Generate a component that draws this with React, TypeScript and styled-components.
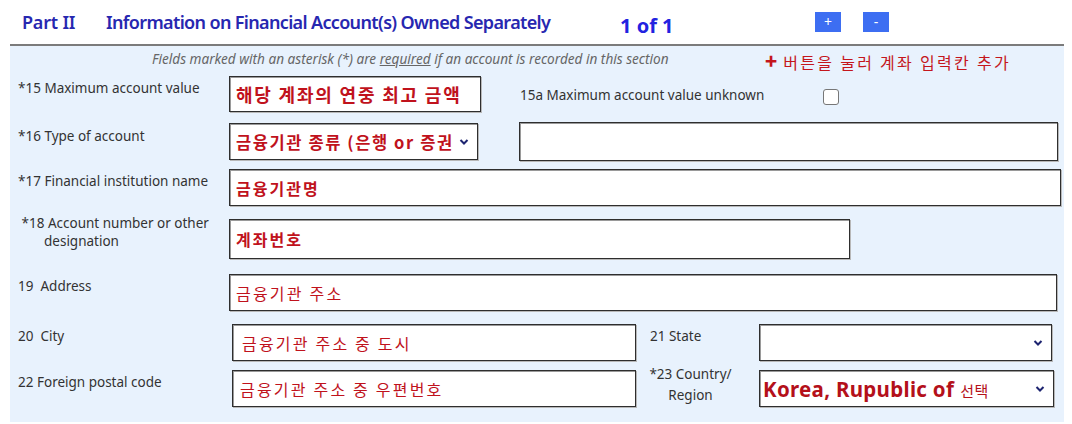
import styled, { createGlobalStyle } from "styled-components";

const GlobalStyle = createGlobalStyle`
  body {
    margin: 0;
    background: #ffffff;
    font-family: "Noto Sans", "Noto Sans CJK KR", sans-serif;
  }
`;

const Page = styled.div`
  width: 1072px;
  height: 424px;
  overflow: hidden;
`;

const Header = styled.div`
  height: 44px;
  display: flex;
  align-items: center;
  padding-left: 22px;
  box-sizing: border-box;
`;

const PartLabel = styled.div`
  font-size: 18px;
  font-weight: 600;
  color: #2727b0;
  width: 84px;
  letter-spacing: -0.2px;
`;

const Title = styled.div`
  font-size: 18px;
  font-weight: 600;
  color: #2727b0;
  width: 514px;
  letter-spacing: -0.65px;
`;

const Counter = styled.div`
  font-size: 20px;
  font-weight: 700;
  color: #2222e0;
  width: 195px;
  margin-top: 6px;
`;

const SmallButton = styled.button`
  width: 26px;
  height: 20px;
  margin-right: 22px;
  border: none;
  padding: 0;
  background: #3d6ef2;
  color: #ffffff;
  font-family: "Noto Sans", sans-serif;
  font-size: 14px;
  line-height: 20px;
`;

const Panel = styled.div`
  margin-left: 10px;
  width: 1054px;
  height: 378px;
  border-top: 2px solid #7b7b7b;
  background: #e8f2fd;
  padding-left: 8px;
  box-sizing: border-box;
`;

const Notice = styled.div`
  height: 24px;
  display: flex;
  align-items: center;
  padding-left: 134px;
`;

const Hint = styled.div`
  font-size: 13.6px;
  font-style: italic;
  color: #666666;
  width: 613px;
  white-space: nowrap;
  u {
    text-decoration: underline;
  }
`;

const AddHint = styled.div`
  font-family: "Noto Sans CJK KR", sans-serif;
  font-size: 16px;
  letter-spacing: 2.3px;
  color: #c4161c;
  margin-top: 4px;
  white-space: nowrap;
  b {
    font-size: 20px;
    font-weight: 800;
    margin-right: 6px;
    letter-spacing: 0;
  }
`;

const Row = styled.div<{ $top: number }>`
  display: flex;
  align-items: flex-start;
  margin-top: ${(p) => p.$top}px;
`;

const Label = styled.div<{ $width: number; $offset?: number; $indent?: number }>`
  width: ${(p) => p.$width}px;
  flex-shrink: 0;
  box-sizing: border-box;
  font-size: 13.5px;
  line-height: 18px;
  color: #333333;
  margin-top: ${(p) => p.$offset ?? 3}px;
  padding-left: ${(p) => p.$indent ?? 0}px;
  white-space: pre;
`;

const Indent = styled.span`
  display: block;
  padding-left: 26px;
`;

const CenterLabel = styled.div<{ $width: number }>`
  width: ${(p) => p.$width}px;
  flex-shrink: 0;
  font-size: 13.5px;
  line-height: 21px;
  color: #333333;
  text-align: center;
  margin-top: -6px;
  padding-right: 14px;
  box-sizing: border-box;
`;

const Field = styled.div<{ $width: number; $height: number }>`
  width: ${(p) => p.$width}px;
  height: ${(p) => p.$height}px;
  flex-shrink: 0;
  box-sizing: border-box;
  border: 1px solid #2e2e2e;
  box-shadow: inset 1px 1px 0 #9a9a9a, 1px 1px 0 #b8b8b8;
  background: #ffffff;
  display: flex;
  align-items: center;
  padding-left: 6px;
  padding-right: 8px;
`;

const Value = styled.span<{ $size: number; $bold?: boolean; $shift?: number; $spacing?: number }>`
  font-family: "Noto Sans CJK KR", sans-serif;
  font-size: ${(p) => p.$size}px;
  font-weight: ${(p) => (p.$bold ? 700 : 400)};
  color: #c0121c;
  flex: 1;
  white-space: nowrap;
  overflow: hidden;
  padding-left: ${(p) => p.$shift ?? 0}px;
  letter-spacing: ${(p) => p.$spacing ?? 2}px;
`;

const CountryValue = styled.span`
  flex: 1;
  color: #b4101a;
  white-space: nowrap;
  font-family: "Noto Sans", sans-serif;
  font-size: 20.5px;
  font-weight: 700;
  letter-spacing: 0.3px;
  margin-left: -3px;
  small {
    font-family: "Noto Sans CJK KR", sans-serif;
    font-size: 15px;
    font-weight: 400;
    margin-left: 6px;
    letter-spacing: 0.5px;
  }
`;

const InlineLabel = styled.div`
  font-size: 13.5px;
  color: #333333;
  margin: 10px 0 0 39px;
  width: 303px;
`;

const Checkbox = styled.div`
  width: 14px;
  height: 14px;
  margin-top: 13px;
  border: 1px solid #777777;
  border-radius: 3px;
  background: #ffffff;
`;

function Chevron() {
  return (
    <svg width="10" height="8" viewBox="0 0 10 8">
      <polyline points="1.5,2 5,5.5 8.5,2" fill="none" stroke="#1d2470" strokeWidth="2" />
    </svg>
  );
}

export default function App() {
  return (
    <Page>
      <GlobalStyle />
      <Header>
        <PartLabel>Part II</PartLabel>
        <Title>Information on Financial Account(s) Owned Separately</Title>
        <Counter>1 of 1</Counter>
        <SmallButton>+</SmallButton>
        <SmallButton>-</SmallButton>
      </Header>
      <Panel>
        <Notice>
          <Hint>
            Fields marked with an asterisk (*) are <u>required</u> if an account is recorded in this section
          </Hint>
          <AddHint>
            <b>+</b>버튼을 눌러 계좌 입력칸 추가
          </AddHint>
        </Notice>

        <Row $top={6}>
          <Label $width={211}>*15 Maximum account value</Label>
          <Field $width={252} $height={36}>
            <Value $size={18} $bold $spacing={1.8}>해당 계좌의 연중 최고 금액</Value>
          </Field>
          <InlineLabel>15a Maximum account value unknown</InlineLabel>
          <Checkbox />
        </Row>

        <Row $top={11}>
          <Label $width={211} $offset={4}>*16 Type of account</Label>
          <Field $width={249} $height={37}>
            <Value $size={16.5} $bold $spacing={1.6}>금융기관 종류 (은행 or 증권</Value>
            <Chevron />
          </Field>
          <Field $width={539} $height={39} style={{ marginLeft: 41, marginTop: -1 }} />
        </Row>

        <Row $top={8}>
          <Label $width={211}>*17 Financial institution name</Label>
          <Field $width={832} $height={37}>
            <Value $size={16} $bold>금융기관명</Value>
          </Field>
        </Row>

        <Row $top={13}>
          <Label $width={211} $offset={-5}>
            {" *18 Account number or other"}
            <Indent>designation</Indent>
          </Label>
          <Field $width={621} $height={40}>
            <Value $size={16} $bold>계좌번호</Value>
          </Field>
        </Row>

        <Row $top={15}>
          <Label $width={211}>19  Address</Label>
          <Field $width={828} $height={37}>
            <Value $size={16} $spacing={2.2}>금융기관 주소</Value>
          </Field>
        </Row>

        <Row $top={13}>
          <Label $width={214}>20  City</Label>
          <Field $width={404} $height={37}>
            <Value $size={16} $shift={3} $spacing={2.2}>금융기관 주소 중 도시</Value>
          </Field>
          <Label $width={123} $indent={14}>21 State</Label>
          <Field $width={293} $height={37}>
            <Value $size={16} />
            <Chevron />
          </Field>
        </Row>

        <Row $top={9}>
          <Label $width={214}>22 Foreign postal code</Label>
          <Field $width={404} $height={37}>
            <Value $size={16} $shift={1} $spacing={2.2}>금융기관 주소 중 우편번호</Value>
          </Field>
          <CenterLabel $width={123}>
            *23 Country/
            <br />
            Region
          </CenterLabel>
          <Field $width={295} $height={37}>
            <CountryValue>
              Korea, Rupublic of<small>선택</small>
            </CountryValue>
            <Chevron />
          </Field>
        </Row>
      </Panel>
    </Page>
  );
}
